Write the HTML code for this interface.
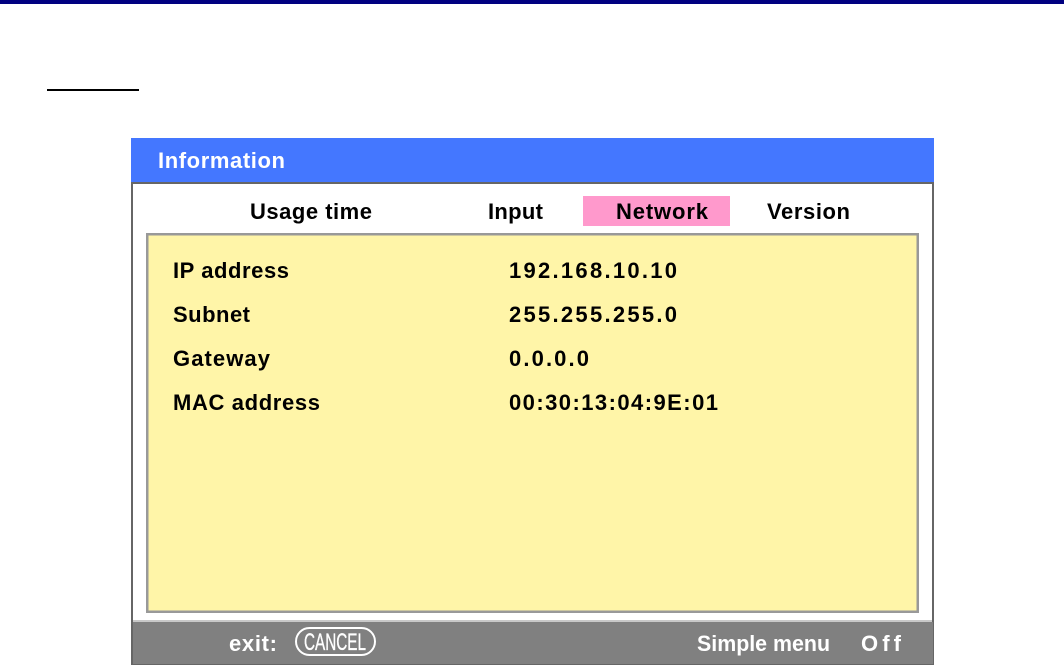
<!DOCTYPE html>
<html>
<head>
<meta charset="utf-8">
<style>
html,body{margin:0;padding:0;background:#fff;width:1064px;height:665px;overflow:hidden}
svg{display:block}
text{font-family:"Liberation Sans",sans-serif;font-size:22px;font-weight:700;fill:#000}
.w{fill:#fff;font-weight:700}
.n{fill:#fff;font-weight:400;stroke:#fff;stroke-width:.35px}
</style>
</head>
<body>
<svg width="1064" height="665" viewBox="0 0 1064 665" xmlns="http://www.w3.org/2000/svg">
<rect x="0" y="0" width="1064" height="4" fill="#000080"/>
<rect x="47" y="89" width="92" height="2" fill="#000"/>

<rect x="131" y="138" width="803" height="527" fill="#666"/>
<rect x="133" y="184" width="799" height="436" fill="#fff"/>
<rect x="131" y="138" width="803" height="44" fill="#4477ff"/>
<rect x="133" y="620" width="799" height="2" fill="#c8c8c8"/>
<rect x="133" y="622" width="800" height="42" fill="#808080"/>

<rect x="583" y="196" width="147" height="30" fill="#ff99cc"/>
<rect x="147.25" y="234.25" width="770.5" height="377.5" fill="#fff5a8" stroke="#999" stroke-width="2.5"/>

<text class="w" x="158" y="168" textLength="127" lengthAdjust="spacing">Information</text>

<text x="250" y="219" textLength="122" lengthAdjust="spacing">Usage time</text>
<text x="488" y="219" textLength="55" lengthAdjust="spacing">Input</text>
<text x="616" y="219" textLength="92" lengthAdjust="spacing">Network</text>
<text x="767" y="219" textLength="83" lengthAdjust="spacing">Version</text>

<text x="173" y="278" textLength="116" lengthAdjust="spacing">IP address</text>
<text x="173" y="322" textLength="77" lengthAdjust="spacing">Subnet</text>
<text x="173" y="366" textLength="97" lengthAdjust="spacing">Gateway</text>
<text x="173" y="410" textLength="147" lengthAdjust="spacing">MAC address</text>

<text x="509" y="278" textLength="168" lengthAdjust="spacing">192.168.10.10</text>
<text x="509" y="322" textLength="168" lengthAdjust="spacing">255.255.255.0</text>
<text x="509" y="366" textLength="80" lengthAdjust="spacing">0.0.0.0</text>
<text x="509" y="410" textLength="209" lengthAdjust="spacing">00:30:13:04:9E:01</text>

<text class="w" x="229" y="651" textLength="48" lengthAdjust="spacing">exit:</text>
<rect x="296" y="628" width="79" height="27" rx="13.5" ry="13.5" fill="none" stroke="#fff" stroke-width="2"/>
<text class="n" x="304" y="650" textLength="62" lengthAdjust="spacingAndGlyphs" style="font-size:24px">CANCEL</text>
<text class="w" x="697" y="651" textLength="133" lengthAdjust="spacingAndGlyphs">Simple menu</text>
<text class="w" x="861" y="651" textLength="40" lengthAdjust="spacing">Off</text>
</svg>
</body>
</html>
